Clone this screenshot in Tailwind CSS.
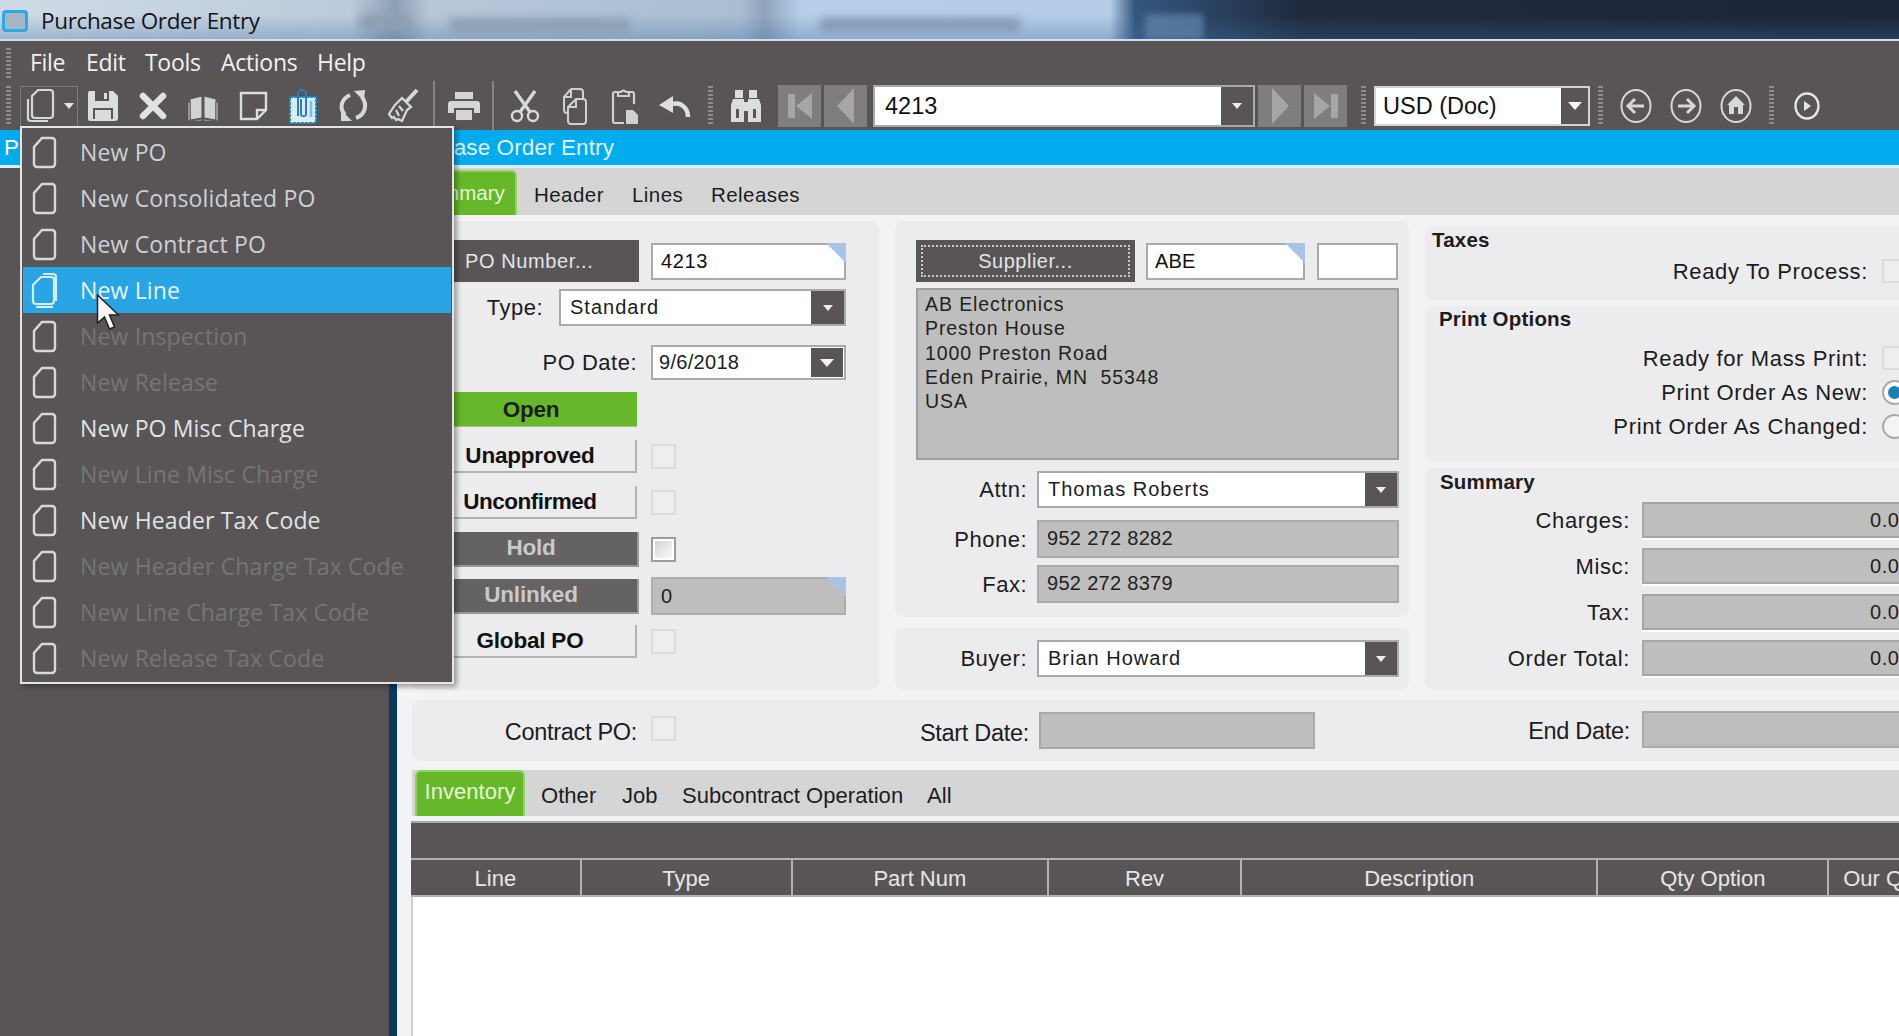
<!DOCTYPE html>
<html lang="en">
<head>
<meta charset="utf-8">
<title>Purchase Order Entry</title>
<script src="https://cdn.jsdelivr.net/npm/@tailwindcss/browser@4"></script>
</head>
<body class="m-0 overflow-hidden bg-[#595557]">
<div class="relative w-[1899px] h-[1036px] overflow-hidden font-['Liberation_Sans',sans-serif] text-[#1c1c22] bg-[#595557]">

  <!-- Title bar -->
  <div class="relative h-[41px] overflow-hidden border-b-2 border-[#d5dfeb] bg-[linear-gradient(to_right,#cfdae6_0px,#bccbdc_350px,#8d9fb5_395px,#b7c7d9_430px,#a9bdd3_740px,#8ea3bb_765px,#b7cde8_800px,#b5cce8_1110px,#35577f_1135px,#1f2a3d_1300px,#1b2537_1899px)]">
    <div class="absolute inset-x-0 bottom-0 h-[24px] bg-[linear-gradient(to_bottom,transparent,#3f6d9e55)]"></div>
    <div class="absolute left-[1145px] top-[14px] w-[58px] h-[26px] rounded-t-[4px] bg-[#5d7fa5]/80 blur-[3px]"></div>
    <div class="absolute left-[360px] top-[14px] w-[50px] h-[16px] bg-[#8f9fb2] blur-[4px]"></div>
    <div class="absolute left-[450px] top-[18px] w-[180px] h-[16px] bg-[#8ea1b7] blur-[4px]"></div>
    <div class="absolute left-[820px] top-[18px] w-[200px] h-[14px] bg-[#849cb9] blur-[4px]"></div>
    <div class="relative flex items-center h-[39px] pt-[2px]">
      <div class="ml-[2px] w-[26px] h-[22px] rounded-[4px] border-[3px] border-[#29a9e6] bg-[#a6b4c6]"></div>
      <span class="ml-[13px] text-[22.5px] font-['Open_Sans',sans-serif] text-[#141414] tracking-[-0.35px]">Purchase Order Entry</span>
    </div>
  </div>

  <!-- Menu bar -->
  <div class="flex items-center h-[39px] pt-[4px] text-[23px] font-['Open_Sans',sans-serif] text-[#f1f1f3] tracking-[-0.3px]">
    <div class="ml-[6px] mr-[19px] w-[5px] h-[30px] bg-[repeating-linear-gradient(to_bottom,#8f8d8e_0_2px,transparent_2px_4px)]"></div>
    <span class="w-[56px]">File</span>
    <span class="w-[59px]">Edit</span>
    <span class="w-[76px]">Tools</span>
    <span class="w-[96px]">Actions</span>
    <span>Help</span>
  </div>

  <!-- Toolbar -->
  <div class="flex items-center h-[50px] pt-[2px]">
    <div class="ml-[6px] w-[5px] h-[40px] bg-[repeating-linear-gradient(to_bottom,#8f8d8e_0_2px,transparent_2px_4px)]"></div>
    <div class="ml-[9px] w-[58px] h-[41px] border border-[#7d7b7c] flex items-center">
      <svg class="ml-[4px]" width="31" height="36" viewBox="0 0 31 36" fill="none" stroke="#d8d8d8" stroke-width="2.2"><path d="M13 2h12a3 3 0 0 1 3 3v22a3 3 0 0 1-3 3H10a3 3 0 0 1-3-3V8z"/><path d="M3 11v19a3 3 0 0 0 3 3h17"/></svg>
      <svg class="ml-[8px]" width="10" height="6" viewBox="0 0 10 6"><path d="M0 0h10L5 6z" fill="#e4e4e4"/></svg>
    </div>
    <!-- save -->
    <div class="w-[50px] flex justify-center"><svg width="32" height="32" viewBox="0 0 32 32"><path d="M3 1h23l5 5v22a3 3 0 0 1-3 3H3a2 2 0 0 1-2-2V3a2 2 0 0 1 2-2z" fill="#dcdcdc"/><path d="M8 1h14v10H8z" fill="#595557"/><path d="M17 3h3v6h-3z" fill="#dcdcdc"/><path d="M6 18h20v11H6z" fill="#595557"/><path d="M8 20h16v9H8z" fill="#dcdcdc"/></svg></div>
    <!-- X -->
    <div class="w-[50px] flex justify-center"><svg width="28" height="28" viewBox="0 0 28 28" stroke="#e2e2e2" stroke-width="6.5" stroke-linecap="round"><path d="M4 4l20 20M24 4L4 24"/></svg></div>
    <!-- book -->
    <div class="w-[50px] flex justify-center pt-[4px]"><svg width="32" height="28" viewBox="0 0 32 28" fill="#d2d2d2" stroke="#595557" stroke-width="1"><path d="M3 5l12-3v22l-12 2z"/><path d="M29 5l-12-3v22l12 2z"/><path d="M1 8h2v19l12-2v2H1zM31 8h-2v19l-12-2v2h14z"/></svg></div>
    <!-- note -->
    <div class="w-[50px] flex justify-center"><svg width="29" height="30" viewBox="0 0 29 30" fill="none" stroke="#dcdcdc" stroke-width="2.4"><path d="M2 2h25v17l-9 9H2z"/><path d="M27 19h-9v9"/></svg></div>
    <!-- clip -->
    <div class="w-[50px] flex justify-center"><svg width="30" height="38" viewBox="0 0 30 38" fill="none"><path d="M2 10h26v26H2z" fill="#d9ebf7" stroke="#1c87cf" stroke-width="2" stroke-dasharray="3 1"/><path d="M10 29V7a4 4 0 0 1 8 0v21a3 3 0 0 1-5 0V12" stroke="#2a7fc4" stroke-width="2"/><path d="M23 14v16" stroke="#7dbde8" stroke-width="2.500"/></svg></div>
    <!-- refresh -->
    <div class="w-[50px] flex justify-center"><svg width="32" height="36" viewBox="0 0 32 36" fill="#d8d8d8"><path d="M13 7C4 11 2 20 8 27" fill="none" stroke="#d8d8d8" stroke-width="4"/><path d="M25 9C31 17 28 27 19 30" fill="none" stroke="#d8d8d8" stroke-width="4"/><path d="M17 3l11-1-1 11z"/><path d="M4 22l11 11H4z"/></svg></div>
    <!-- brush -->
    <div class="w-[50px] flex justify-center"><svg width="32" height="36" viewBox="0 0 32 36" fill="none" stroke="#d8d8d8" stroke-width="2.2"><path d="M19 14L30 2" stroke-width="4"/><path d="M15 10l9 9-4 3-5 11-4-2-2 1-2-3-2 1-3-4 6-9z"/><path d="M12 18l4 5M9 22l3 6"/></svg></div>
    <div class="ml-[5px] w-[2px] h-[50px] bg-[#858384]"></div>
    <!-- printer -->
    <div class="w-[50px] ml-[4px] flex justify-center"><svg width="32" height="30" viewBox="0 0 32 30" fill="#d6d6d6"><path d="M7 1h18v7H7z"/><path d="M3 10h26a3 3 0 0 1 3 3v9h-6v-5H6v5H0v-9a3 3 0 0 1 3-3z"/><path d="M8 19h16v10H8z"/></svg></div>
    <div class="ml-[3px] w-[2px] h-[50px] bg-[#858384]"></div>
    <!-- scissors -->
    <div class="ml-[6px] w-[50px] flex justify-center"><svg width="30" height="34" viewBox="0 0 30 34" fill="none" stroke="#d8d8d8"><path d="M25 2L10 23M5 2l15 21" stroke-width="3.4"/><circle cx="7" cy="27" r="5" stroke-width="2.4"/><circle cx="23" cy="27" r="5" stroke-width="2.4"/></svg></div>
    <!-- copy -->
    <div class="w-[50px] flex justify-center"><svg width="26" height="37" viewBox="0 0 26 37" fill="none" stroke="#d0d0d0" stroke-width="2"><path d="M9 1h9a3 3 0 0 1 3 3v6"/><path d="M9 1L2 9v13a3 3 0 0 0 3 3h1"/><path d="M9 1v8H2"/><path d="M14 11h7a3 3 0 0 1 3 3v19a3 3 0 0 1-3 3H9a3 3 0 0 1-3-3V19z"/><path d="M14 11v8H6"/></svg></div>
    <!-- paste -->
    <div class="w-[50px] flex justify-center"><svg width="28" height="38" viewBox="0 0 28 38" fill="none" stroke="#d0d0d0" stroke-width="2.2"><path d="M7 5H4a2 2 0 0 0-2 2v27a2 2 0 0 0 2 2h9"/><path d="M18 5h3a2 2 0 0 1 2 2v10"/><path d="M7 9V5h3a3 3 0 0 1 5 0h3v4z" fill="#595557"/><path d="M15 23h7l5 5v9H15z" fill="#d0d0d0" stroke="none"/></svg></div>
    <!-- undo -->
    <div class="w-[50px] flex justify-center"><svg width="32" height="24" viewBox="0 0 32 24" fill="none"><path d="M29 23c0-9-7-15-15-13" stroke="#dedede" stroke-width="4.5"/><path d="M0 11l14-9v17z" fill="#dedede"/></svg></div>
    <div class="ml-[8px] w-[5px] h-[40px] bg-[repeating-linear-gradient(to_bottom,#8f8d8e_0_2px,transparent_2px_4px)]"></div>
    <!-- binoculars -->
    <div class="ml-[8px] w-[50px] flex justify-center"><svg width="32" height="34" viewBox="0 0 32 34" fill="#dcdcdc"><path d="M5 1h8v8H5zM19 1h8v8h-8z"/><path d="M3 10h11v23H1V16zM29 10H18v23h13V16z"/><path d="M14 13h4v9h-4z"/><path d="M6 20h3v9H6zM23 20h3v9h-3z" fill="#595557"/></svg></div>
    <!-- nav -->
    <div class="ml-[7px] w-[43px] h-[42px] bg-[#7f7d7e] flex items-center justify-center"><svg width="26" height="26" viewBox="0 0 26 26" fill="#a6a6a6"><path d="M1 1h7v24H1zM25 0v26L9 13z"/></svg></div>
    <div class="ml-[3px] w-[43px] h-[42px] bg-[#7f7d7e] flex items-center justify-center"><svg width="18" height="36" viewBox="0 0 18 36" fill="#a6a6a6"><path d="M17 0v36L0 18z"/></svg></div>
    <div class="ml-[6px] w-[382px] h-[42px] border-2 border-[#a9a9a9] bg-white flex">
      <span class="flex-1 pl-[10px] text-[23.5px] leading-[38px] text-[#111]">4213</span>
      <div class="w-[32px] bg-[#595557] flex items-center justify-center"><svg width="10" height="6" viewBox="0 0 10 6"><path d="M0 0h10L5 6z" fill="#eee"/></svg></div>
    </div>
    <div class="ml-[3px] w-[43px] h-[42px] bg-[#7f7d7e] flex items-center justify-center"><svg width="18" height="36" viewBox="0 0 18 36" fill="#a6a6a6"><path d="M1 0v36l17-18z"/></svg></div>
    <div class="ml-[3px] w-[43px] h-[42px] bg-[#7f7d7e] flex items-center justify-center"><svg width="26" height="26" viewBox="0 0 26 26" fill="#a6a6a6"><path d="M18 1h7v24h-7zM1 0v26l16-13z"/></svg></div>
    <div class="ml-[14px] w-[5px] h-[40px] bg-[repeating-linear-gradient(to_bottom,#8f8d8e_0_2px,transparent_2px_4px)]"></div>
    <div class="ml-[8px] w-[216px] h-[40px] border-2 border-[#d4d4d4] bg-white flex">
      <span class="flex-1 pl-[7px] text-[23.5px] leading-[37px] text-[#111]">USD (Doc)</span>
      <div class="w-[27px] bg-[#595557] flex items-center justify-center"><svg width="14" height="8" viewBox="0 0 14 8"><path d="M0 0h14L7 8z" fill="#f2f2f2"/></svg></div>
    </div>
    <div class="ml-[8px] w-[5px] h-[40px] bg-[repeating-linear-gradient(to_bottom,#8f8d8e_0_2px,transparent_2px_4px)]"></div>
    <!-- circles -->
    <svg class="ml-[17px]" width="32" height="36" viewBox="0 0 32 36" fill="none" stroke="#d8d8d8"><ellipse cx="16" cy="18" rx="14.5" ry="16" stroke-width="2"/><path d="M24 18H10" stroke-width="3"/><path d="M15 11l-7 7 7 7" stroke-width="3"/></svg>
    <svg class="ml-[18px]" width="32" height="36" viewBox="0 0 32 36" fill="none" stroke="#d8d8d8"><ellipse cx="16" cy="18" rx="14.5" ry="16" stroke-width="2"/><path d="M8 18h14" stroke-width="3"/><path d="M17 11l7 7-7 7" stroke-width="3"/></svg>
    <svg class="ml-[18px]" width="32" height="36" viewBox="0 0 32 36" fill="none" stroke="#d8d8d8"><ellipse cx="16" cy="18" rx="14.5" ry="16" stroke-width="2"/><path d="M16 8l9 9h-2v9H9v-9H7z" fill="#d8d8d8" stroke="none"/><path d="M14 19h4v7h-4z" fill="#595557" stroke="none"/></svg>
    <div class="ml-[17px] w-[5px] h-[40px] bg-[repeating-linear-gradient(to_bottom,#8f8d8e_0_2px,transparent_2px_4px)]"></div>
    <svg class="ml-[20px]" width="26" height="28" viewBox="0 0 26 28" fill="none"><ellipse cx="13" cy="14" rx="11.5" ry="12.5" stroke="#e6e6e6" stroke-width="2.4"/><path d="M10 9l7 5-7 5z" fill="#e6e6e6"/></svg>
  </div>

  <!-- Blue title strip -->
  <div class="h-[35px] bg-[#00acee] flex items-center text-white text-[22.5px]">
    <div class="w-[614px] flex items-center">
      <span class="ml-[4px]">P</span>
      <span class="flex-1 text-right text-[#e2f5fd] tracking-[0.1px]">Purchase Order Entry</span>
    </div>
  </div>
  <div class="h-[3px] bg-[#d9eef8]"></div>

  <!-- Body -->
  <div class="flex h-[868px]">
    <div class="w-[389px] bg-[#595557] shrink-0"></div>
    <div class="w-[8px] bg-[#0c3a5f] shrink-0"></div>
    <div class="w-[1502px] bg-[#f3f3f5] shrink-0 overflow-hidden">

      <!-- top tabs -->
      <div class="flex items-end h-[47px] bg-[#d5d5d5] text-[20.5px] tracking-[0.45px] text-[#1c1c22]">
        <div class="ml-[18px] w-[102px] h-[45px] rounded-t-[6px] bg-[#66b82a] border-2 border-b-0 border-[#8fd061] pr-[14px] text-right text-[#e6f5d8] leading-[42px] tracking-[0px]">Summary</div>
        <span class="ml-[17px] w-[98px] pb-[4px]">Header</span>
        <span class="w-[79px] pb-[4px]">Lines</span>
        <span class="pb-[4px]">Releases</span>
      </div>

      <!-- main panels -->
      <div class="flex pt-[6px] pl-[15px] items-start">
        <!-- left form panel -->
        <div class="w-[467px] shrink-0 h-[469px] rounded-[8px] bg-[#ecebed] pt-[19px] flex flex-col items-start text-[22px] tracking-[0.5px]">
          <div class="flex items-center h-[42px]">
            <div class="ml-[27px] w-[200px] h-[42px] bg-[#595557] text-[20px] tracking-[0.6px] leading-[42px] pl-[26px] text-[#e4e4e6]">PO Number...</div>
            <div class="relative ml-[12px] w-[195px] h-[37px] border-2 border-[#aaa] bg-white text-[20px] tracking-[0.6px] leading-[33px] pl-[8px] text-[#111]">4213<span class="absolute -top-[2px] -right-[2px] w-0 h-0 border-t-[20px] border-l-[20px] border-t-[#a9c4e4] border-l-transparent"></span></div>
          </div>
          <div class="flex items-center h-[37px] mt-[7px] w-[434px]">
            <span class="w-[131px] text-right">Type:</span>
            <div class="ml-[16px] w-[287px] h-[37px] border-2 border-[#aaa] bg-white flex text-[20px] tracking-[1px] leading-[33px]"><span class="flex-1 pl-[9px]">Standard</span><div class="w-[33px] bg-[#595557] flex items-center justify-center"><svg width="10" height="6" viewBox="0 0 10 6"><path d="M0 0h10L5 6z" fill="#eee"/></svg></div></div>
          </div>
          <div class="flex items-center h-[35px] mt-[19px]">
            <span class="w-[225px] text-right">PO Date:</span>
            <div class="ml-[14px] w-[195px] h-[35px] border-2 border-[#aaa] bg-white flex text-[20px] tracking-[0.3px] leading-[31px]"><span class="flex-1 pl-[6px]">9/6/2018</span><div class="w-[32px] m-[1px] bg-[#595557] flex items-center justify-center"><svg width="14" height="8" viewBox="0 0 14 8"><path d="M0 0h14L7 8z" fill="#f2f2f2"/></svg></div></div>
          </div>
          <div class="ml-[13px] mt-[12px] w-[212px] h-[35px] bg-[#66b82a] border-b border-[#a2c488] text-center font-bold text-[22.5px] tracking-[-0.2px] leading-[35px]">Open</div>
          <div class="flex items-center h-[33px] mt-[13px]">
            <div class="ml-[13px] w-[212px] h-[33px] border-r-2 border-b-2 border-[#b3b3b3] text-center font-bold text-[22.5px] tracking-[-0.2px] leading-[32px] text-[#111]">Unapproved</div>
            <div class="ml-[14px] w-[25px] h-[25px] border-2 border-[#dcdcdc] bg-[#eeeeef]"></div>
          </div>
          <div class="flex items-center h-[33px] mt-[13px]">
            <div class="ml-[13px] w-[212px] h-[33px] border-r-2 border-b-2 border-[#b3b3b3] text-center font-bold text-[22.5px] tracking-[-0.5px] leading-[32px] text-[#111]">Unconfirmed</div>
            <div class="ml-[14px] w-[25px] h-[25px] border-2 border-[#dcdcdc] bg-[#eeeeef]"></div>
          </div>
          <div class="flex items-center h-[35px] mt-[13px]">
            <div class="ml-[13px] w-[214px] h-[35px] bg-[#646263] border-r-2 border-b-2 border-[#989898] text-center font-bold text-[22.5px] tracking-[-0.2px] leading-[32px] text-[#c9c9cb]">Hold</div>
            <div class="ml-[12px] w-[25px] h-[25px] border-2 border-[#9c9c9c] bg-[linear-gradient(135deg,#cfcfcf,#ffffff)] shadow-[inset_0_0_0_2px_#fff]"></div>
          </div>
          <div class="flex items-center h-[38px] mt-[10px]">
            <div class="ml-[13px] w-[214px] h-[35px] bg-[#646263] border-r-2 border-b-2 border-[#989898] text-center font-bold text-[22.5px] tracking-[-0.2px] leading-[32px] text-[#c9c9cb]">Unlinked</div>
            <div class="relative ml-[12px] w-[195px] h-[38px] border-2 border-[#adadad] bg-[#bebebe] text-[20px] leading-[34px] pl-[8px] text-[#222]">0<span class="absolute -top-[2px] -right-[2px] w-0 h-0 border-t-[20px] border-l-[20px] border-t-[#a9c4e4] border-l-transparent"></span></div>
          </div>
          <div class="flex items-center h-[33px] mt-[10px]">
            <div class="ml-[13px] w-[212px] h-[33px] border-r-2 border-b-2 border-[#b3b3b3] text-center font-bold text-[22.5px] tracking-[-0.2px] leading-[32px] text-[#111]">Global PO</div>
            <div class="ml-[14px] w-[25px] h-[25px] border-2 border-[#dcdcdc] bg-[#eeeeef]"></div>
          </div>
        </div>

        <!-- supplier column -->
        <div class="ml-[16px] w-[514px] shrink-0 flex flex-col gap-[11px]">
          <div class="h-[396px] rounded-[8px] bg-[#ecebed] pt-[19px] pl-[21px] text-[22px] tracking-[0.5px]">
            <div class="flex items-center h-[42px]">
              <div class="w-[219px] h-[42px] bg-[#595557] p-[5px]"><div class="h-[32px] border-2 border-dotted border-[#c8c8c8] text-center text-[20px] tracking-[0.5px] leading-[28px] text-[#e4e4e6]">Supplier...</div></div>
              <div class="relative ml-[11px] w-[159px] h-[37px] border-2 border-[#aaa] bg-white text-[20px] tracking-[0.1px] leading-[33px] pl-[7px] text-[#111]">ABE<span class="absolute -top-[2px] -right-[2px] w-0 h-0 border-t-[20px] border-l-[20px] border-t-[#a9c4e4] border-l-transparent"></span></div>
              <div class="ml-[12px] w-[81px] h-[37px] border-2 border-[#aaa] bg-white"></div>
            </div>
            <div class="mt-[6px] w-[483px] h-[172px] border-2 border-[#9e9e9e] bg-[#bebebe] pl-[7px] pt-[2px] text-[19.5px] tracking-[0.9px] leading-[24.3px] whitespace-pre text-[#222]">AB Electronics
Preston House
1000 Preston Road
Eden Prairie, MN  55348
USA</div>
            <div class="flex items-center h-[37px] mt-[11px]">
              <span class="w-[111px] text-right">Attn:</span>
              <div class="ml-[10px] w-[362px] h-[37px] border-2 border-[#aaa] bg-white flex text-[20px] tracking-[1px] leading-[33px]"><span class="flex-1 pl-[9px]">Thomas Roberts</span><div class="w-[32px] bg-[#595557] flex items-center justify-center"><svg width="10" height="6" viewBox="0 0 10 6"><path d="M0 0h10L5 6z" fill="#eee"/></svg></div></div>
            </div>
            <div class="flex items-center h-[38px] mt-[12px]">
              <span class="w-[111px] text-right">Phone:</span>
              <div class="ml-[10px] w-[362px] h-[38px] border-2 border-[#aaa] bg-[#bebebe] text-[20px] tracking-[0.3px] leading-[32px] pl-[8px] text-[#222]">952 272 8282</div>
            </div>
            <div class="flex items-center h-[38px] mt-[7px]">
              <span class="w-[111px] text-right">Fax:</span>
              <div class="ml-[10px] w-[362px] h-[38px] border-2 border-[#aaa] bg-[#bebebe] text-[20px] tracking-[0.3px] leading-[32px] pl-[8px] text-[#222]">952 272 8379</div>
            </div>
          </div>
          <div class="h-[62px] rounded-[8px] bg-[#ecebed] pt-[12px] pl-[21px] text-[22px] tracking-[0.5px]">
            <div class="flex items-center h-[37px]">
              <span class="w-[111px] text-right">Buyer:</span>
              <div class="ml-[10px] w-[362px] h-[37px] border-2 border-[#aaa] bg-white flex text-[20px] tracking-[1px] leading-[33px]"><span class="flex-1 pl-[9px]">Brian Howard</span><div class="w-[32px] bg-[#595557] flex items-center justify-center"><svg width="10" height="6" viewBox="0 0 10 6"><path d="M0 0h10L5 6z" fill="#eee"/></svg></div></div>
            </div>
          </div>
        </div>

        <!-- right column -->
        <div class="ml-[16px] w-[520px] shrink-0 flex flex-col gap-[6px] mt-[5px] text-[22px] tracking-[0.65px]">
          <div class="h-[74px] rounded-[8px] bg-[#ecebed] pl-[7px]">
            <div class="font-bold text-[20.5px] tracking-[0.2px] leading-[28px]">Taxes</div>
            <div class="flex items-center justify-end h-[28px] mt-[3px]">
              <span class="mr-[14px]">Ready To Process:</span>
              <div class="mr-[38px] w-[25px] h-[24px] border-2 border-[#dcdcdc] bg-[#eeeeef]"></div>
            </div>
          </div>
          <div class="h-[156px] rounded-[8px] bg-[#ecebed] pl-[14px]">
            <div class="font-bold text-[20.5px] tracking-[0.2px] leading-[26px]">Print Options</div>
            <div class="flex items-center justify-end h-[28px] mt-[12px]">
              <span class="mr-[14px]">Ready for Mass Print:</span>
              <div class="mr-[38px] w-[25px] h-[24px] border-2 border-[#dcdcdc] bg-[#eeeeef]"></div>
            </div>
            <div class="flex items-center justify-end h-[28px] mt-[6px]">
              <span class="mr-[14px]">Print Order As New:</span>
              <div class="mr-[38px] w-[25px] h-[25px] rounded-full border-2 border-[#a9a9a9] bg-white flex items-center justify-center"><div class="w-[13px] h-[13px] rounded-full bg-[#1a80b8]"></div></div>
            </div>
            <div class="flex items-center justify-end h-[28px] mt-[6px]">
              <span class="mr-[14px]">Print Order As Changed:</span>
              <div class="mr-[38px] w-[25px] h-[25px] rounded-full border-2 border-[#a9a9a9] bg-[#f4f4f4]"></div>
            </div>
          </div>
          <div class="h-[222px] rounded-[8px] bg-[#ecebed] pl-[15px]">
            <div class="font-bold text-[20.5px] tracking-[0.2px] leading-[28px]">Summary</div>
            <div class="flex items-center h-[35px] mt-[6px]">
              <span class="w-[190px] pt-[2px] text-right">Charges:</span>
              <div class="ml-[12px] w-[295px] h-[36px] border-2 border-[#a6a6a6] bg-[#bebebe] shadow-[0_2px_0_#fff] text-right pr-[24px] text-[20px] tracking-[0.5px] leading-[32px] text-[#222]">0.00</div>
            </div>
            <div class="flex items-center h-[35px] mt-[11px]">
              <span class="w-[190px] pt-[2px] text-right">Misc:</span>
              <div class="ml-[12px] w-[295px] h-[36px] border-2 border-[#a6a6a6] bg-[#bebebe] shadow-[0_2px_0_#fff] text-right pr-[24px] text-[20px] tracking-[0.5px] leading-[32px] text-[#222]">0.00</div>
            </div>
            <div class="flex items-center h-[35px] mt-[11px]">
              <span class="w-[190px] pt-[2px] text-right">Tax:</span>
              <div class="ml-[12px] w-[295px] h-[36px] border-2 border-[#a6a6a6] bg-[#bebebe] shadow-[0_2px_0_#fff] text-right pr-[24px] text-[20px] tracking-[0.5px] leading-[32px] text-[#222]">0.00</div>
            </div>
            <div class="flex items-center h-[35px] mt-[11px]">
              <span class="w-[190px] pt-[2px] text-right">Order Total:</span>
              <div class="ml-[12px] w-[295px] h-[36px] border-2 border-[#a6a6a6] bg-[#bebebe] shadow-[0_2px_0_#fff] text-right pr-[24px] text-[20px] tracking-[0.5px] leading-[32px] text-[#222]">0.00</div>
            </div>
          </div>
        </div>
      </div>

      <!-- Contract row -->
      <div class="ml-[15px] mt-[10px] h-[61px] w-[1600px] rounded-[8px] bg-[#ecebed] flex items-center text-[23.5px] tracking-[-0.3px]">
        <span class="ml-[73px] pt-[4px] w-[152px] text-right">Contract PO:</span>
        <div class="ml-[14px] -mt-[5px] w-[25px] h-[25px] border-2 border-[#dcdcdc] bg-[#eeeeef]"></div>
        <span class="ml-[224px] mt-[7px] w-[129px] text-right">Start Date:</span>
        <div class="ml-[10px] w-[276px] h-[37px] border-2 border-[#a9a9a9] bg-[#bebebe]"></div>
        <span class="ml-[192px] pt-[2px] w-[123px] text-right">End Date:</span>
        <div class="ml-[12px] -mt-[2px] w-[300px] h-[37px] border-2 border-[#a9a9a9] bg-[#bebebe]"></div>
      </div>

      <!-- Sub tabs -->
      <div class="ml-[15px] mt-[9px] h-[46px] flex items-end bg-[#d5d5d5] text-[22px] text-[#1c1c22] tracking-[0.05px]">
        <div class="ml-[3px] w-[110px] h-[46px] rounded-t-[6px] bg-[#66b82a] border-2 border-b-0 border-[#8fd061] text-center text-[#e6f5d8] leading-[40px]">Inventory</div>
        <span class="ml-[16px] w-[81px] pb-[4px]">Other</span>
        <span class="w-[60px] pb-[4px]">Job</span>
        <span class="w-[245px] pb-[4px]">Subcontract Operation</span>
        <span class="pb-[4px]">All</span>
      </div>

      <!-- Grid -->
      <div class="ml-[14px] mt-[5px] w-[1600px] h-[215px] bg-white">
        <div class="h-[37px] bg-[#595557] border-t-2 border-[#a9a9a9]"></div>
        <div class="flex h-[39px] bg-[#595557] border-t-2 border-b-2 border-[#b2b2b2] text-[22px] text-[#e6e6e8] leading-[38px] text-center">
          <div class="w-[171px] border-r-2 border-[#b2b2b2]">Line</div>
          <div class="w-[211px] border-r-2 border-[#b2b2b2]">Type</div>
          <div class="w-[257px] border-r-2 border-[#b2b2b2]">Part Num</div>
          <div class="w-[193px] border-r-2 border-[#b2b2b2]">Rev</div>
          <div class="w-[357px] border-r-2 border-[#b2b2b2]">Description</div>
          <div class="w-[231px] border-r-2 border-[#b2b2b2]">Qty Option</div>
          <div class="w-[182px] text-left pl-[14px]">Our Qty</div>
        </div>
        <div class="h-[139px] border-l-2 border-[#cfcfcf]"></div>
      </div>
    </div>
  </div>

  <!-- Dropdown menu overlay -->
  <div class="absolute left-[20px] top-[126px] w-[434px] h-[558px] bg-[#595557] border-2 border-[#e4e4e4] shadow-[3px_3px_5px_rgba(0,0,0,0.35)] p-[1px] text-[23px] font-['Open_Sans',sans-serif] tracking-[0.15px]">
    <div class="flex items-center h-[46px] text-[#ccd0d6]"><svg class="ml-[8px]" width="27" height="33" viewBox="0 0 27 33" fill="none" stroke="#d8d8d8" stroke-width="2.4"><path d="M11 2h10a3 3 0 0 1 3 3v23a3 3 0 0 1-3 3H6a3 3 0 0 1-3-3V11z"/></svg><span class="ml-[22px]">New PO</span></div>
    <div class="flex items-center h-[46px] text-[#ccd0d6]"><svg class="ml-[8px]" width="27" height="33" viewBox="0 0 27 33" fill="none" stroke="#d8d8d8" stroke-width="2.4"><path d="M11 2h10a3 3 0 0 1 3 3v23a3 3 0 0 1-3 3H6a3 3 0 0 1-3-3V11z"/></svg><span class="ml-[22px]">New Consolidated PO</span></div>
    <div class="flex items-center h-[46px] text-[#ccd0d6]"><svg class="ml-[8px]" width="27" height="33" viewBox="0 0 27 33" fill="none" stroke="#d8d8d8" stroke-width="2.4"><path d="M11 2h10a3 3 0 0 1 3 3v23a3 3 0 0 1-3 3H6a3 3 0 0 1-3-3V11z"/></svg><span class="ml-[22px]">New Contract PO</span></div>
    <div class="flex items-center h-[46px] bg-[#29a5e5] text-[#e8f4fb]"><svg class="ml-[6px]" width="31" height="36" viewBox="0 0 31 36" fill="none" stroke="#d5edf9" stroke-width="2.2"><path d="M14 2h10a3 3 0 0 1 3 3v24"/><path d="M12 5h10a3 3 0 0 1 3 3v21a3 3 0 0 1-3 3H7a3 3 0 0 1-3-3V13z"/><path d="M7 35h17"/></svg><span class="ml-[20px]">New Line</span></div>
    <div class="flex items-center h-[46px] text-[#767476]"><svg class="ml-[8px]" width="27" height="33" viewBox="0 0 27 33" fill="none" stroke="#d8d8d8" stroke-width="2.4"><path d="M11 2h10a3 3 0 0 1 3 3v23a3 3 0 0 1-3 3H6a3 3 0 0 1-3-3V11z"/></svg><span class="ml-[22px]">New Inspection</span></div>
    <div class="flex items-center h-[46px] text-[#767476]"><svg class="ml-[8px]" width="27" height="33" viewBox="0 0 27 33" fill="none" stroke="#d8d8d8" stroke-width="2.4"><path d="M11 2h10a3 3 0 0 1 3 3v23a3 3 0 0 1-3 3H6a3 3 0 0 1-3-3V11z"/></svg><span class="ml-[22px]">New Release</span></div>
    <div class="flex items-center h-[46px] text-[#e0e3e8]"><svg class="ml-[8px]" width="27" height="33" viewBox="0 0 27 33" fill="none" stroke="#d8d8d8" stroke-width="2.4"><path d="M11 2h10a3 3 0 0 1 3 3v23a3 3 0 0 1-3 3H6a3 3 0 0 1-3-3V11z"/></svg><span class="ml-[22px]">New PO Misc Charge</span></div>
    <div class="flex items-center h-[46px] text-[#767476]"><svg class="ml-[8px]" width="27" height="33" viewBox="0 0 27 33" fill="none" stroke="#d8d8d8" stroke-width="2.4"><path d="M11 2h10a3 3 0 0 1 3 3v23a3 3 0 0 1-3 3H6a3 3 0 0 1-3-3V11z"/></svg><span class="ml-[22px]">New Line Misc Charge</span></div>
    <div class="flex items-center h-[46px] text-[#e0e3e8]"><svg class="ml-[8px]" width="27" height="33" viewBox="0 0 27 33" fill="none" stroke="#d8d8d8" stroke-width="2.4"><path d="M11 2h10a3 3 0 0 1 3 3v23a3 3 0 0 1-3 3H6a3 3 0 0 1-3-3V11z"/></svg><span class="ml-[22px]">New Header Tax Code</span></div>
    <div class="flex items-center h-[46px] text-[#767476]"><svg class="ml-[8px]" width="27" height="33" viewBox="0 0 27 33" fill="none" stroke="#d8d8d8" stroke-width="2.4"><path d="M11 2h10a3 3 0 0 1 3 3v23a3 3 0 0 1-3 3H6a3 3 0 0 1-3-3V11z"/></svg><span class="ml-[22px]">New Header Charge Tax Code</span></div>
    <div class="flex items-center h-[46px] text-[#767476]"><svg class="ml-[8px]" width="27" height="33" viewBox="0 0 27 33" fill="none" stroke="#d8d8d8" stroke-width="2.4"><path d="M11 2h10a3 3 0 0 1 3 3v23a3 3 0 0 1-3 3H6a3 3 0 0 1-3-3V11z"/></svg><span class="ml-[22px]">New Line Charge Tax Code</span></div>
    <div class="flex items-center h-[46px] text-[#767476]"><svg class="ml-[8px]" width="27" height="33" viewBox="0 0 27 33" fill="none" stroke="#d8d8d8" stroke-width="2.4"><path d="M11 2h10a3 3 0 0 1 3 3v23a3 3 0 0 1-3 3H6a3 3 0 0 1-3-3V11z"/></svg><span class="ml-[22px]">New Release Tax Code</span></div>
  </div>

  <!-- Mouse cursor -->
  <svg class="absolute left-[96px] top-[294px]" width="24" height="37" viewBox="0 0 24 37"><path d="M1.500 1v28l7-6 5 12 5-2-5-12h9z" fill="#f8f8f8" stroke="#222" stroke-width="1.500"/></svg>
</div>
</body>
</html>
